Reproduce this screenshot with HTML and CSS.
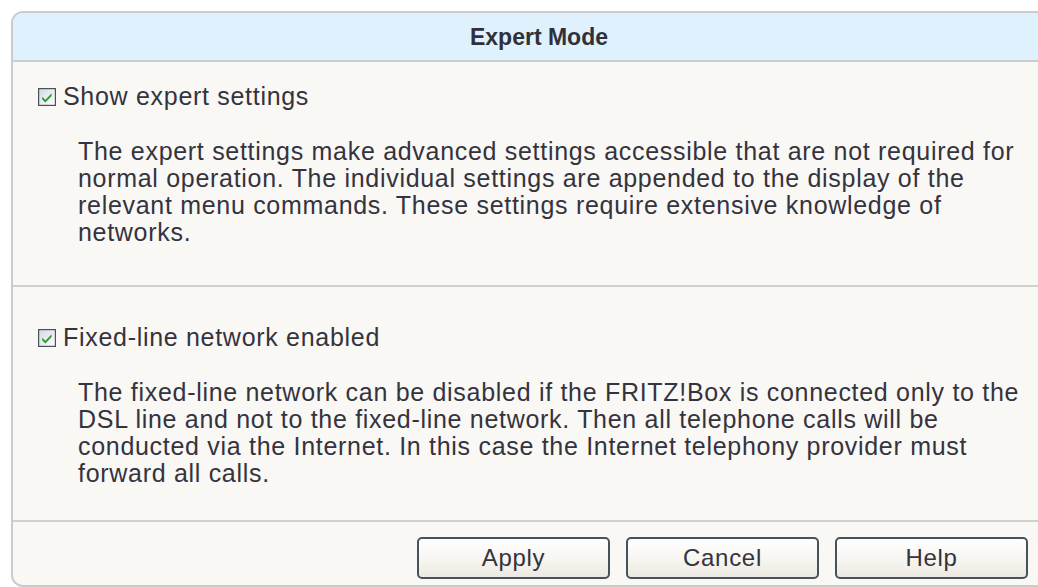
FILE: index.html
```html
<!DOCTYPE html>
<html lang="en">
<head>
<meta charset="utf-8">
<title>Expert Mode</title>
<link rel="stylesheet" href="styles.css">
</head>
<body>
  <div class="panel">
    <div class="panel-head">Expert Mode</div>

    <section class="option">
      <label class="option-label">
        <span class="check">
          <svg viewBox="0 0 18 18" width="18" height="18" aria-hidden="true">
            <defs>
              <linearGradient id="boxfill" x1="0" y1="0" x2="1" y2="1">
                <stop offset="0" stop-color="#d3d9df"/>
                <stop offset="1" stop-color="#ffffff"/>
              </linearGradient>
            </defs>
            <rect x="0.6" y="0.6" width="16.8" height="16.8" fill="url(#boxfill)" stroke="#46525e" stroke-width="1.2"/>
            <path d="M4.2 8.8 L7.4 11.8 L13.6 5.3 L13.6 8 L7.4 14.4 L4.2 11.4 Z" fill="#2f9a35"/>
          </svg>
        </span>
        Show expert settings
      </label>
      <p class="option-text">The expert settings make advanced settings accessible that are not required for normal operation. The individual settings are appended to the display of the relevant menu commands. These settings require extensive knowledge of networks.</p>
    </section>

    <section class="option">
      <label class="option-label">
        <span class="check">
          <svg viewBox="0 0 18 18" width="18" height="18" aria-hidden="true">
            <rect x="0.6" y="0.6" width="16.8" height="16.8" fill="url(#boxfill)" stroke="#46525e" stroke-width="1.2"/>
            <path d="M4.2 8.8 L7.4 11.8 L13.6 5.3 L13.6 8 L7.4 14.4 L4.2 11.4 Z" fill="#2f9a35"/>
          </svg>
        </span>
        Fixed-line network enabled
      </label>
      <p class="option-text">The fixed-line network can be disabled if the FRITZ!Box is connected only to the DSL line and not to the fixed-line network. Then all telephone calls will be conducted via the Internet. In this case the Internet telephony provider must forward all calls.</p>
    </section>

    <div class="panel-foot">
      <button class="btn" type="button">Apply</button>
      <button class="btn" type="button">Cancel</button>
      <button class="btn" type="button">Help</button>
    </div>
  </div>
</body>
</html>
```

FILE: styles.css
```css
html, body {
  margin: 0;
  background: #ffffff;
  overflow: hidden;
}

body {
  padding: 11px 0 0 11px;
  font-family: "Liberation Sans", Arial, sans-serif;
  font-size: 25px;
  letter-spacing: 0.7px;
  color: #34333e;
}

.panel {
  width: 1052px;
  height: 572px;
  border: 2px solid #c9cccd;
  border-radius: 12px;
  background: #f9f8f4;
  display: flex;
  flex-direction: column;
  overflow: hidden;
}

.panel-head {
  flex: 0 0 auto;
  height: 47px;
  line-height: 49px;
  text-align: center;
  font-size: 23px;
  font-weight: bold;
  letter-spacing: 0;
  color: #30303a;
  background: #dff1fc;
  border-bottom: 2px solid #c9cccd;
}

.option {
  padding: 37px 0 33px 25px;
  border-bottom: 2px solid #d0d0ce;
}

.option:first-of-type {
  padding-top: 21px;
  padding-bottom: 39px;
}

.option-label {
  display: flex;
  align-items: center;
  gap: 7px;
  line-height: 27px;
}

.check {
  display: block;
  width: 18px;
  height: 18px;
}

.check svg {
  display: block;
}

.option-text {
  margin: 28px 0 0 40px;
  width: 965px;
  line-height: 27px;
}

.panel-foot {
  display: flex;
  justify-content: flex-end;
  gap: 16px;
  padding: 15px 37px 0 0;
}

.btn {
  width: 193px;
  height: 42px;
  padding: 0;
  font-family: inherit;
  font-size: 24px;
  letter-spacing: 0.7px;
  color: #34333e;
  border: 2px solid #46525c;
  border-radius: 5px;
  background: linear-gradient(180deg, #ffffff 0%, #f6f5f0 55%, #ebe9e0 100%);
}
```
